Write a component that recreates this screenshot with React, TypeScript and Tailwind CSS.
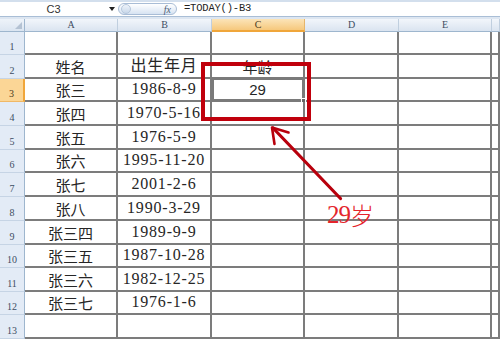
import React from 'react'

const cols = ['A', 'B', 'C', 'D', 'E', '']

const rows: { h: string; a: string; b: string; c: string }[] = [
  { h: 'h-[23px]', a: '', b: '', c: '' },
  { h: 'h-[24px]', a: '姓名', b: '出生年月', c: '年龄' },
  { h: 'h-[23px]', a: '张三', b: '1986-8-9', c: '29' },
  { h: 'h-[24px]', a: '张四', b: '1970-5-16', c: '' },
  { h: 'h-[24px]', a: '张五', b: '1976-5-9', c: '' },
  { h: 'h-[23px]', a: '张六', b: '1995-11-20', c: '' },
  { h: 'h-[24px]', a: '张七', b: '2001-2-6', c: '' },
  { h: 'h-[24px]', a: '张八', b: '1990-3-29', c: '' },
  { h: 'h-[24px]', a: '张三四', b: '1989-9-9', c: '' },
  { h: 'h-[23px]', a: '张三五', b: '1987-10-28', c: '' },
  { h: 'h-[24px]', a: '张三六', b: '1982-12-25', c: '' },
  { h: 'h-[23px]', a: '张三七', b: '1976-1-6', c: '' },
  { h: 'h-[24px]', a: '', b: '', c: '' },
]

const cjk = "font-['Noto_Sans_CJK_SC',sans-serif]"
const serifNum = "font-['Liberation_Serif','Noto_Sans_CJK_SC',serif]"
const cell = 'flex items-end justify-center pb-[3px] border-r-2 border-b-2 border-[#7c7c7c] leading-none text-[#262626] overflow-visible whitespace-nowrap'

export default function App() {
  return (
    <div className="relative w-[500px] h-[339px] overflow-hidden bg-white">
      {/* formula bar */}
      <div className="flex h-[17px] items-stretch border-t-2 border-b border-t-[#d3dfed] border-b-[#a9bed6] bg-white">
        <div className="w-[107px] flex items-center justify-center text-[11px] text-[#333] font-['Liberation_Sans',sans-serif]">C3</div>
        <div className="w-[10px] flex items-center justify-center">
          <svg width="6" height="4" viewBox="0 0 6 4"><path d="M0 0h6L3 4z" fill="#222" /></svg>
        </div>
        <div className="ml-[1px] my-[1px] w-[59px] flex items-center justify-between rounded-full border border-[#a9bdd6] bg-gradient-to-b from-[#ffffff] to-[#d7e3f2] pl-[2px] pr-[5px]">
          <span className="w-[10px] h-[10px] rounded-full border border-[#b6c7dc] bg-gradient-to-b from-[#eef3fa] to-[#c9d8ea]" />
          <span className="italic text-[10px] text-[#4f5f75] font-['Liberation_Serif',serif]">fx</span>
        </div>
        <div className="ml-[7px] flex items-center text-[10.5px] text-[#222] font-['Liberation_Mono',monospace] tracking-[-0.2px]">=TODAY()-B3</div>
      </div>
      <div className="h-[2px] bg-[#dde6f1]" />

      {/* column headers */}
      <div className="grid grid-cols-[25px_93px_94px_93px_94px_93px_8px] h-[13px]">
        <div className="relative bg-gradient-to-b from-[#eef3f9] to-[#dbe5f1] border-r border-b border-[#9eb6ce]">
          <svg className="absolute right-[2px] bottom-[2px]" width="7" height="7" viewBox="0 0 7 7"><path d="M7 0v7H0z" fill="#b4c2d3" /></svg>
        </div>
        {cols.map((c, i) => (
          <div
            key={i}
            className={
              c === 'C'
                ? "flex items-center justify-center text-[10px] leading-none text-[#4a3a20] font-['Liberation_Serif',serif] bg-gradient-to-b from-[#fbe4b8] to-[#f6c87c] border-r border-b-2 border-r-[#e6b56a] border-b-[#f0a63a]"
                : "flex items-center justify-center text-[10px] leading-none text-[#3d4d63] font-['Liberation_Serif',serif] bg-gradient-to-b from-[#f2f6fb] to-[#dae4f0] border-r border-b border-r-[#c0cfdf] border-b-[#9eb6ce]"
            }
          >
            {c}
          </div>
        ))}
      </div>

      {/* body */}
      {rows.map((r, i) => (
        <div key={i} className={`grid grid-cols-[25px_93px_94px_93px_94px_93px_8px] ${r.h}`}>
          <div
            className={
              i === 2
                ? "flex items-end justify-center pb-[2px] text-[10px] leading-none text-[#4a3a20] font-['Liberation_Serif',serif] bg-[#fbd696] border-r-2 border-b border-r-[#f0a63a] border-b-[#f0b866]"
                : "flex items-end justify-center pb-[2px] text-[10px] leading-none text-[#3d4d63] font-['Liberation_Serif',serif] bg-[#e3ebf6] border-r border-b border-r-[#9eb6ce] border-b-[#c6d4e5]"
            }
          >
            {i + 1}
          </div>
          <div className={`${cell} ${cjk} text-[15px]`}>{r.a}</div>
          <div className={`${cell} ${serifNum} text-[16px] tracking-[0.8px]`}>{r.b}</div>
          <div className={`${cell} relative text-[15px] ${r.c === '29' ? "font-['Liberation_Sans',sans-serif] text-[#333]" : cjk}`}>
            {r.c}
            {i === 2 && (
              <span className="absolute left-[-1px] top-[-2px] right-[-2px] bottom-[-2px] border-[3px] border-[#7a7a7a]">
                <span className="absolute right-[-4px] bottom-[-4px] w-[5px] h-[5px] bg-[#666] border border-white" />
              </span>
            )}
          </div>
          <div className={cell} />
          <div className={cell} />
          <div className={cell} />
        </div>
      ))}

      {/* annotation */}
      <div className="absolute left-[201px] top-[62px] w-[110px] h-[59px] border-4 border-[#c0000c]" />
      <svg className="absolute left-0 top-0" width="500" height="339" viewBox="0 0 500 339">
        <path d="M340.5 198.5L273 128" stroke="#b8000c" strokeWidth="3.2" strokeLinecap="round" />
        <path d="M274.5 144L272 127.5L288.5 132.5" stroke="#b8000c" strokeWidth="2.6" fill="none" strokeLinecap="round" strokeLinejoin="round" />
      </svg>
      <div className="absolute left-[327px] top-[202px] flex items-end leading-none text-[24px] text-[#e4252c]">
        <span className="font-['Liberation_Serif',serif] text-[25px] tracking-[-1px]">29</span>
        <span className={`${cjk} font-light`}>岁</span>
      </div>
    </div>
  )
}
